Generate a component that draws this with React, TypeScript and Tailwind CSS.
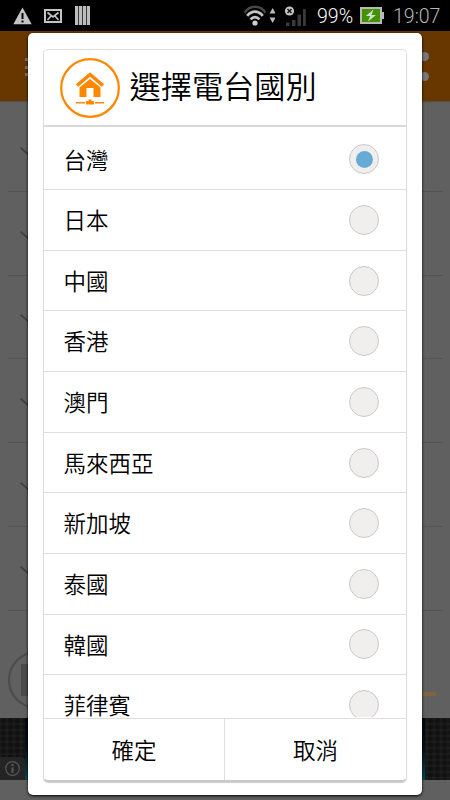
import { useState } from 'react';

const countries = ['台灣', '日本', '中國', '香港', '澳門', '馬來西亞', '新加坡', '泰國', '韓國', '菲律賓'];

function StatusBar() {
  return (
    <header className="flex h-[31px] shrink-0 items-center bg-black pl-[13px] pr-[8px] font-[Roboto,sans-serif] text-[19.5px] leading-none text-[#b9b9b9]">
      <svg width="19" height="18" viewBox="0 0 19 18" fill="#c4c4c4">
        <path d="M9.5 .5 18.7 17.2H.3Z" />
        <path d="M9.5 6v6M9.5 13.5v2" stroke="#000" strokeWidth="2" />
      </svg>
      <svg className="ml-[12px]" width="18" height="14" viewBox="0 0 18 14" fill="none" stroke="#c4c4c4">
        <rect x="1" y="1" width="16" height="12" strokeWidth="2" />
        <path d="M3.500 3.500 9 8l5.500-4.500M3.500 11l3.500-4M14.500 11 11 7" strokeWidth="1.700" />
      </svg>
      <svg className="ml-[13px]" width="15" height="19" viewBox="0 0 15 19" fill="#bdbdbd">
        <path d="M0 0h3.300v19H0ZM4 0h3.300v19H4ZM8 0h3.300v19H8ZM12 0h3v19h-3Z" />
      </svg>
      <div className="grow" />
      {/* Wi-Fi */}
      <svg width="32" height="22" viewBox="0 0 32 22" fill="none">
        <path d="M1.500 7.700C7-.2 17-.2 22.500 7.700" stroke="#474747" strokeWidth="2.500" />
        <path d="M4.200 10.800c4.500-5.500 11.100-5.500 15.600 0M7.500 14.400c2.700-3.100 6.300-3.100 9 0" stroke="#c4c4c4" strokeWidth="2.700" />
        <circle cx="12" cy="18" r="2.600" fill="#d0d0d0" />
        <path d="M26.500 8.500 29.700 3l3 5.500ZM26.500 12.500h6.200L29.700 18Z" fill="#b9b9b9" />
      </svg>
      {/* Mobile signal */}
      <svg className="mb-[2px] ml-[9px]" width="23" height="22" viewBox="0 0 23 22">
        <path d="M2 18.500h3.500V22H2ZM8 16h3.500v6H8ZM13.500 10.500H17V22h-3.500ZM19 5h2.800v17H19Z" fill="#3a3a3a" />
        <circle cx="5.500" cy="7" r="4.600" fill="#c5c5c5" />
        <path d="m3.500 5 4 4m0-4-4 4" stroke="#111" strokeWidth="1.500" />
      </svg>
      <span className="ml-[10px] mt-[2px] w-[38px] whitespace-nowrap text-white">99%</span>
      <svg className="ml-[5px]" width="24" height="17" viewBox="0 0 24 17">
        <rect x="1" y="1" width="20" height="15" fill="#429300" stroke="#b9b9b9" strokeWidth="2" />
        <path d="M21 5h3v7h-3Z" fill="#b9b9b9" />
        <path d="M13.500 2.500 5.800 9h4.400l-2.200 5.500L16 8h-4.500Z" fill="#d5ddce" />
      </svg>
      <span className="ml-[9px] mt-[2px] w-[49px] whitespace-nowrap">19:07</span>
    </header>
  );
}

function HomeLogo() {
  return (
    <svg width="60" height="60" viewBox="0 0 60 60" fill="none" stroke="#ff8800">
      <circle cx="30" cy="30" r="28.800" strokeWidth="2.300" />
      <path d="m17 27.500 13-11 13 11" strokeWidth="3.600" />
      <path d="m30 21 10.500 8.500v9.500h-7v-9h-7v9h-7v-9.500Z" fill="#ff8800" stroke="none" />
      <path d="M16 44.700h9M35 44.700h9" strokeWidth="1.600" />
      <path d="M26 43h2.500v-1.500h3V43H34v3.500h-8Z" fill="#ff8800" stroke="none" />
    </svg>
  );
}

// Dimmed page that stays behind the dialog
function StationPage() {
  return (
    <div className="flex grow flex-col bg-[#606060]">
      <div className="flex h-[70px] shrink-0 items-center justify-between bg-[#683700] pl-[25px] pr-[21px]">
        <div className="flex flex-col gap-[4.500px] pt-[2px]">
          <span className="h-[3px] w-[20px] bg-[#777]" />
          <span className="h-[3px] w-[20px] bg-[#777]" />
          <span className="h-[3px] w-[20px] bg-[#777]" />
        </div>
        <div className="flex flex-col gap-[11px]">
          <span className="size-[9px] rounded-full bg-[#777]" />
          <span className="size-[9px] rounded-full bg-[#777]" />
        </div>
      </div>
      <div className="h-[7px] shrink-0 bg-linear-to-b from-[#4c4c4c] to-[#606060] to-30%" />
      {[0, 1, 2, 3, 4, 5].map((row) => (
        <div key={row} className="mx-[7.500px] flex h-[83.800px] shrink-0 items-center border-b border-[#545454] pl-[12.500px] pt-[4px]">
          <svg width="18" height="9" viewBox="0 0 18 9" fill="none" stroke="#404040" strokeWidth="1.800">
            <path d="m.5.7 8.500 7.300L17.500.7" />
          </svg>
        </div>
      ))}
      <div className="flex grow items-start justify-between px-[7.500px] pt-[40px]">
        <div className="flex size-[58px] shrink-0 items-center rounded-full border-2 border-[#4b4b4b] pl-[11px]">
          <span className="h-[32px] w-[32px] bg-[#4b4b4b]" />
        </div>
        <span className="mr-[7px] mt-[41px] h-[4px] w-[60px] bg-[#80643e]" />
      </div>
      <div className="flex h-[62px] shrink-0 bg-[#181818] bg-[radial-gradient(#111_40%,#1c1c1c_75%)] bg-size-[7px_6px]">
        <div className="flex w-[25px] items-end">
          <div className="flex h-[23px] w-full items-center justify-center rounded-tr-sm bg-[#242424]">
            <svg width="15" height="15" viewBox="0 0 15 15" fill="none" stroke="#585858">
              <circle cx="7.500" cy="7.500" r="6.800" strokeWidth="1.200" />
              <path d="M7.500 3v2M7.500 6.200V12" strokeWidth="2" />
            </svg>
          </div>
        </div>
        <div className="w-[400px] bg-linear-to-b from-[#020612] via-[#04101c] to-[#004d5e]" />
      </div>
      <div className="h-[20px] shrink-0" />
    </div>
  );
}

export default function App() {
  const [selected, setSelected] = useState('台灣');

  return (
    <div className="relative flex h-[800px] w-[450px] flex-col overflow-hidden font-['Noto_Sans_CJK_TC',sans-serif] font-[350] text-black">
      <StatusBar />
      <StationPage />

      <div role="dialog" className="absolute left-[28px] top-[33px] h-[762px] w-[394px] rounded-[5px] bg-white px-[15px] pt-[16px] shadow-[0_1px_3px_#000]">
        <div className="flex h-[733px] flex-col overflow-hidden rounded-[5px] border border-b-2 border-[#dedede] border-b-[#c8c8c8] shadow-[0_1px_1px_#ccc]">
          <div className="flex h-[77px] shrink-0 items-center border-b-[2px] border-[#d9d9d9] pl-[16px]">
            <HomeLogo />
            <h1 className="mb-[5px] ml-[9.500px] text-[31.200px] leading-none">選擇電台國別</h1>
          </div>

          <div className="mb-px min-h-0 grow overflow-hidden pt-[2.500px]">
            {countries.map((country) => (
              <button
                key={country}
                type="button"
                role="radio"
                aria-checked={selected === country}
                onClick={() => setSelected(country)}
                className="flex h-[60.650px] w-full items-center justify-between border-b border-[#dedede] pl-[19.500px] pr-[27px] text-[22.500px]"
              >
                <span className="mb-px leading-none">{country}</span>
                <span className="flex size-[30px] items-center justify-center rounded-full border border-[#c9c9c9] bg-[#f0efee]">
                  {selected === country && <span className="size-[17px] rounded-full bg-[#66abd5]" />}
                </span>
              </button>
            ))}
          </div>

          <div className="flex h-[62px] shrink-0 border-t border-[#dedede] text-[22.500px]">
            <button type="button" className="w-[181px] border-r border-[#dedede] pt-px">確定</button>
            <button type="button" className="flex-1 pt-px">取消</button>
          </div>
        </div>
      </div>
    </div>
  );
}
